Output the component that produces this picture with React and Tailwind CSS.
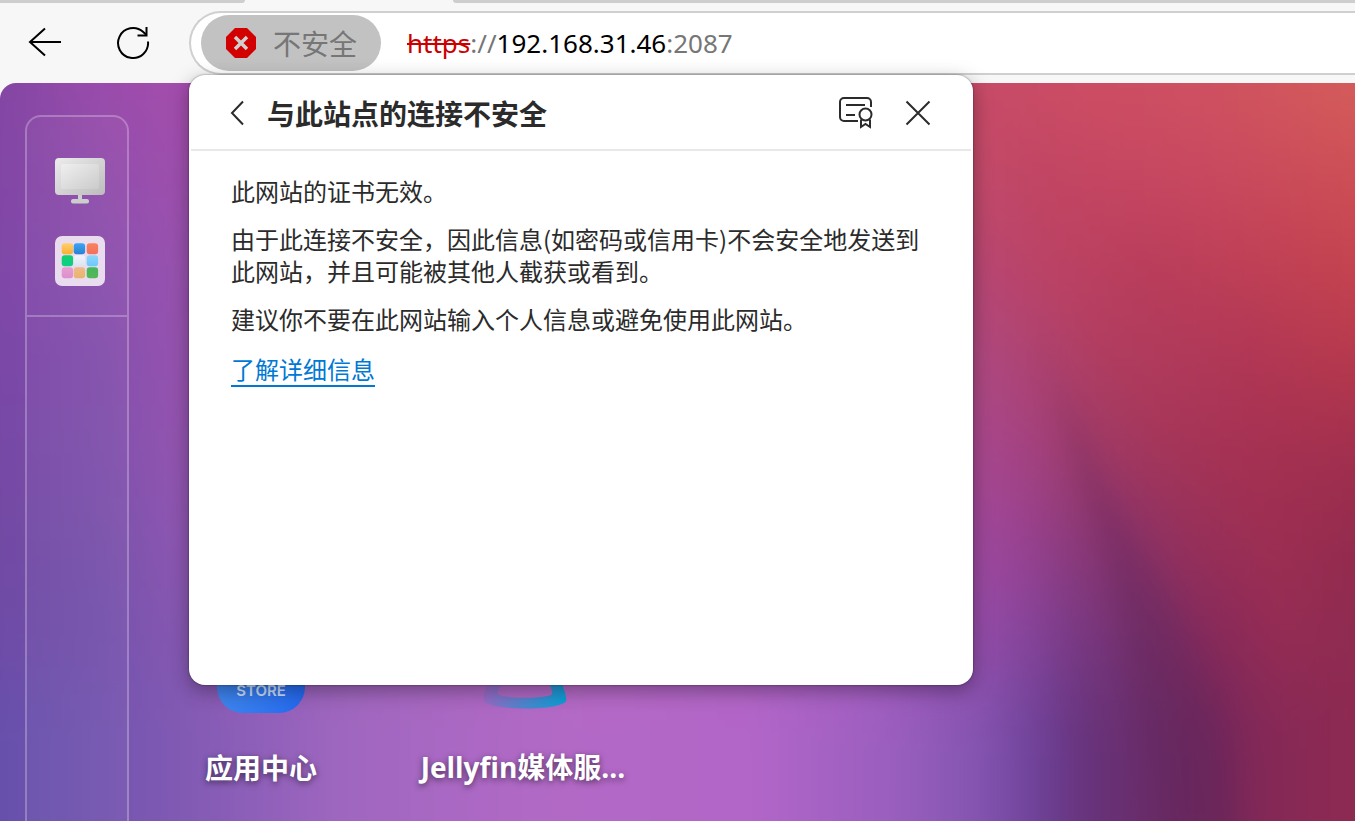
const wallpaperRows = [
  {
    y: -100,
    h: 146,
    stops: [
      [0, "#8346a3"],
      [100, "#9a4cab"],
      [190, "#a54dad"],
      [960, "#c64a68"],
      [1100, "#ce4e63"],
      [1220, "#cf5260"],
      [1355, "#d45d5b"],
    ],
  },
  {
    y: 46,
    h: 92,
    stops: [
      [0, "#8246a5"],
      [100, "#904eac"],
      [190, "#a04fae"],
      [960, "#c24b6b"],
      [1050, "#c14462"],
      [1200, "#c84860"],
      [1355, "#cd4e55"],
    ],
  },
  {
    y: 138,
    h: 92,
    stops: [
      [0, "#7f47a8"],
      [100, "#8a50ad"],
      [190, "#9a52b0"],
      [960, "#b64775"],
      [1050, "#bc4264"],
      [1150, "#b93c5a"],
      [1355, "#c54350"],
    ],
  },
  {
    y: 230,
    h: 92,
    stops: [
      [0, "#7a47a7"],
      [100, "#8250ac"],
      [190, "#9853b0"],
      [960, "#b04a86"],
      [1020, "#ac4474"],
      [1100, "#b03d60"],
      [1250, "#b03655"],
      [1355, "#b6394c"],
    ],
  },
  {
    y: 322,
    h: 92,
    stops: [
      [0, "#7648a5"],
      [100, "#7f51ac"],
      [190, "#9555b0"],
      [960, "#aa4a92"],
      [1030, "#a34180"],
      [1085, "#9c3a68"],
      [1150, "#a4365a"],
      [1250, "#a53152"],
      [1355, "#a22f4e"],
    ],
  },
  {
    y: 414,
    h: 92,
    stops: [
      [0, "#7149a3"],
      [100, "#7852ab"],
      [190, "#8f57b2"],
      [960, "#a04aa0"],
      [1020, "#994292"],
      [1070, "#8c3a7c"],
      [1125, "#87326a"],
      [1190, "#96305a"],
      [1270, "#9c2e52"],
      [1355, "#932b4e"],
    ],
  },
  {
    y: 506,
    h: 92,
    stops: [
      [0, "#6e4ba6"],
      [100, "#7452ac"],
      [190, "#8758b2"],
      [350, "#a164bc"],
      [600, "#b868c5"],
      [850, "#ab5dc3"],
      [960, "#984eae"],
      [1030, "#85449a"],
      [1080, "#783882"],
      [1150, "#742f68"],
      [1210, "#87295a"],
      [1280, "#952c54"],
      [1355, "#8f2b50"],
    ],
  },
  {
    y: 598,
    h: 260,
    stops: [
      [0, "#6650ac"],
      [100, "#7455b0"],
      [190, "#825ab4"],
      [350, "#a067c0"],
      [550, "#b269c6"],
      [750, "#b266c8"],
      [900, "#985ebe"],
      [980, "#8354b0"],
      [1045, "#6c3f94"],
      [1080, "#68347e"],
      [1130, "#682e6e"],
      [1210, "#6e275c"],
      [1260, "#832857"],
      [1355, "#8e2a52"],
    ],
  },
];

const tiles = [
  { x: 7, y: 7, from: "#ffd06a", to: "#fbae33" },
  { x: 19, y: 7, from: "#3aa5f2", to: "#2b7fd4" },
  { x: 32, y: 7, from: "#f9835f", to: "#f3705a" },
  { x: 7, y: 19, from: "#12cf70", to: "#0ccf88" },
  { x: 19, y: 19, from: "#f1f4fc", to: "#dbe4f3" },
  { x: 32, y: 19, from: "#8ed6fb", to: "#6cc8fb" },
  { x: 7, y: 31, from: "#e79fd2", to: "#dd8fce" },
  { x: 19, y: 31, from: "#eeb98c", to: "#e9b566" },
  { x: 32, y: 31, from: "#43b85b", to: "#56b757" },
];

const Wallpaper = () => (
  <svg
    className="absolute inset-0 h-full w-full"
    viewBox="0 0 1355 738"
    preserveAspectRatio="none"
    aria-hidden="true"
  >
    <defs>
      {wallpaperRows.map((row, i) => (
        <linearGradient
          key={i}
          id={`row-${i}`}
          gradientUnits="userSpaceOnUse"
          x1="0"
          x2="1355"
          y1="0"
          y2="0"
        >
          {row.stops.map(([x, color]) => (
            <stop key={x} offset={x / 1355} stopColor={color} />
          ))}
        </linearGradient>
      ))}
      <filter
        id="soften"
        filterUnits="userSpaceOnUse"
        x="-150"
        y="-150"
        width="1655"
        height="1040"
        colorInterpolationFilters="sRGB"
      >
        <feGaussianBlur stdDeviation="14 42" />
      </filter>
      <filter
        id="ridge"
        filterUnits="userSpaceOnUse"
        x="900"
        y="100"
        width="500"
        height="740"
        colorInterpolationFilters="sRGB"
      >
        <feGaussianBlur stdDeviation="12" />
      </filter>
    </defs>
    <g filter="url(#soften)">
      {wallpaperRows.map((row, i) => (
        <rect
          key={i}
          x="-100"
          y={row.y}
          width="1555"
          height={row.h + 1}
          fill={`url(#row-${i})`}
        />
      ))}
    </g>
    {/* Dark fold running down to the right */}
    <path
      d="M1040 250 C1075 350 1120 430 1160 500 C1200 570 1225 640 1240 760 L1160 760 C1150 620 1100 470 1040 250 Z"
      fill="#5c2456"
      opacity="0.25"
      filter="url(#ridge)"
    />
  </svg>
);

const MonitorIcon = () => (
  <svg width="50" height="46" viewBox="0 0 50 46" aria-hidden="true">
    <defs>
      <linearGradient id="frame" x1="0" y1="0" x2="1" y2="1">
        <stop offset="0" stopColor="#ececec" />
        <stop offset="1" stopColor="#bcbcbc" />
      </linearGradient>
      <linearGradient id="screen" x1="0" y1="0" x2="1" y2="1">
        <stop offset="0" stopColor="#efefef" />
        <stop offset="1" stopColor="#cbcbcb" />
      </linearGradient>
    </defs>
    <rect x="23" y="35" width="4" height="8" fill="#cfcfcf" />
    <rect x="16" y="41" width="18" height="4.5" rx="2" fill="#cdcdcd" />
    <rect width="50" height="37" rx="4" fill="url(#frame)" />
    <rect x="6" y="6" width="38" height="25" rx="2" fill="url(#screen)" />
  </svg>
);

const AppsIcon = () => (
  <svg width="50" height="50" viewBox="0 0 50 50" aria-hidden="true">
    <rect width="50" height="50" rx="7" fill="#e9dcef" />
    {tiles.map((tile, i) => (
      <g key={i}>
        <linearGradient id={`tile-${i}`} x1="0" y1="0" x2="0" y2="1">
          <stop offset="0" stopColor={tile.from} />
          <stop offset="1" stopColor={tile.to} />
        </linearGradient>
        <rect
          x={tile.x - 0.3}
          y={tile.y + 0.3}
          width="11.4"
          height="11"
          rx="3"
          fill={`url(#tile-${i})`}
        />
      </g>
    ))}
  </svg>
);

const JellyfinIcon = () => (
  <svg width="88" height="88" viewBox="0 0 88 88" aria-hidden="true">
    <defs>
      <linearGradient id="jelly" x1="0.05" y1="0.5" x2="1" y2="0.9">
        <stop offset="0" stopColor="#a864c4" />
        <stop offset="1" stopColor="#0a9fd6" />
      </linearGradient>
    </defs>
    <path
      fillRule="evenodd"
      fill="url(#jelly)"
      d="M46 2 C36 2 0 66 5 76 C10 86 82 86 87 76 C91 66 56 2 46 2 Z M46 24 C52 24 76 64 73 69 C70 74 22 74 19 69 C16 64 40 24 46 24 Z"
    />
  </svg>
);

const Toolbar = () => (
  <header className="bg-[#f7f7f7]">
    {/* Bottom edge of the tab strip */}
    <div className="flex h-[3px] gap-[208px]">
      <div className="w-[245px] rounded-br-xl bg-[#cecece]" />
      <div className="flex-1 rounded-bl-xl bg-[#cecece]" />
    </div>

    <div className="flex items-center pt-2 pb-2">
      <button type="button" aria-label="返回" className="ml-7">
        <svg width="34" height="32" viewBox="0 0 34 32" fill="none" stroke="#000" strokeWidth="2">
          <path d="M33 15H2M17 1.500L2 15l15 13.500" />
        </svg>
      </button>
      <button type="button" aria-label="刷新" className="ml-[54px]">
        <svg width="34" height="34" viewBox="0 0 34 34" fill="none" stroke="#000" strokeWidth="2">
          <path d="M32 15.500A15 15 0 1 1 27 5.800L30.500 9" />
          <path d="M30.500 1V9.500H21.500" />
        </svg>
      </button>

      <div className="ml-[39px] flex h-16 flex-1 items-center rounded-l-full border-2 border-r-0 border-[#cfcfcf] bg-white pl-[10px]">
        <button
          type="button"
          className="flex h-14 w-[180px] shrink-0 items-center gap-4 rounded-full bg-[#c2c2c2] pl-6 text-[28px] leading-8 text-[#767676]"
        >
          <svg width="32" height="32" viewBox="0 0 32 32" aria-hidden="true">
            <path d="M10 1h12l9 9v12l-9 9H10l-9-9V10z" fill="#d20000" />
            <path d="M10 10l12 12M22 10L10 22" stroke="#d0d0d0" strokeWidth="3.500" />
          </svg>
          不安全
        </button>
        <p className="ml-[26px] font-['Noto_Sans'] text-[26px] leading-8 text-[#767676]">
          <span className="text-[#cc0000] line-through decoration-2">https</span>
          ://<span className="text-black">192.168.31.46</span>:2087
        </p>
      </div>
    </div>
  </header>
);

const SiteInfoPopup = () => (
  <section
    role="dialog"
    aria-labelledby="popup-title"
    className="absolute top-[75px] left-[189px] z-20 h-[610px] w-[784px] rounded-2xl bg-white px-0.5 text-[#2b2b2b] shadow-[0_0_2px_rgba(0,0,0,0.5),0_6px_20px_rgba(0,0,0,0.35)]"
  >
    <div className="flex h-[76px] items-center border-b-2 border-[#e8e8e8] pt-0.5 pr-10 pl-[38px]">
      <button type="button" aria-label="返回">
        <svg width="16" height="26" viewBox="0 0 16 26" fill="none" stroke="#2b2b2b" strokeWidth="2">
          <path d="M14 1.500L3 13l11 11.500" />
        </svg>
      </button>
      <h2 id="popup-title" className="ml-[22px] flex-1 text-[28px] leading-8 font-bold">
        与此站点的连接不安全
      </h2>
      <button type="button" aria-label="显示证书">
        <svg width="34" height="32" viewBox="0 0 34 32" fill="none" stroke="#2b2b2b" strokeWidth="2">
          <path d="M19 24H5a4 4 0 0 1-4-4V5a4 4 0 0 1 4-4h23a4 4 0 0 1 4 4v5" />
          <path d="M7 8h19M7 18h9" />
          <circle cx="26.500" cy="17.500" r="6" />
          <path d="M22 22.500V30l4.500-3 4.500 3v-7.500" />
        </svg>
      </button>
      <button type="button" aria-label="关闭" className="ml-8">
        <svg width="26" height="26" viewBox="0 0 26 26" fill="none" stroke="#2b2b2b" strokeWidth="2">
          <path d="M1.500 1.500l23 23M24.500 1.500l-23 23" />
        </svg>
      </button>
    </div>

    <div className="flex flex-col items-start gap-4 px-10 pt-6 text-2xl leading-8">
      <p>此网站的证书无效。</p>
      <p>
        由于此连接不安全，因此信息(如密码或信用卡)不会安全地发送到此网站，并且可能被其他人截获或看到。
      </p>
      <p>建议你不要在此网站输入个人信息或避免使用此网站。</p>
      <a href="#details" className="mt-0.5 border-b-2 border-[#0078d4] text-[#0078d4]">
        了解详细信息
      </a>
    </div>
  </section>
);

const Desktop = () => (
  <main className="relative flex flex-1 overflow-hidden rounded-tl-2xl">
    <Wallpaper />

    <nav className="relative mt-8 ml-[25px] w-[104px] rounded-t-2xl border-2 border-b-0 border-white/25 bg-white/3">
      <div className="flex flex-col items-start gap-8 border-b-2 border-white/25 pt-[41px] pb-[29px] pl-7">
        <button type="button" aria-label="桌面">
          <MonitorIcon />
        </button>
        <button type="button" aria-label="应用">
          <AppsIcon />
        </button>
      </div>
    </nav>

    <div className="relative ml-[22px] flex items-end gap-[42px] pb-9">
      <a href="#store" className="flex w-[220px] flex-col items-center gap-9">
        <span className="flex h-[88px] w-[88px] items-end justify-center rounded-[26px] bg-linear-to-r from-[#3f86ee] to-[#2468ee] pb-3 font-['Inter'] text-[15px] leading-5 font-semibold text-white/75">
          STORE
        </span>
        <span className="text-[28px] leading-9 font-bold text-white [text-shadow:0_2px_6px_rgba(0,0,0,0.55)]">
          应用中心
        </span>
      </a>
      <a href="#jellyfin" className="flex w-[220px] flex-col items-center gap-9">
        <JellyfinIcon />
        <span className="font-['Open_Sans','Noto_Sans_CJK_SC',sans-serif] text-[28px] leading-9 font-bold whitespace-nowrap text-white [text-shadow:0_2px_6px_rgba(0,0,0,0.55)]">
          Jellyfin媒体服...
        </span>
      </a>
    </div>
  </main>
);

const App = () => {
  return (
    <div
      lang="zh-CN"
      className="relative flex min-h-screen flex-col overflow-hidden bg-[#f7f7f7] font-['Noto_Sans_CJK_SC','Noto_Sans',sans-serif]"
    >
      <Toolbar />
      <Desktop />
      <SiteInfoPopup />
    </div>
  );
};

export default App;
